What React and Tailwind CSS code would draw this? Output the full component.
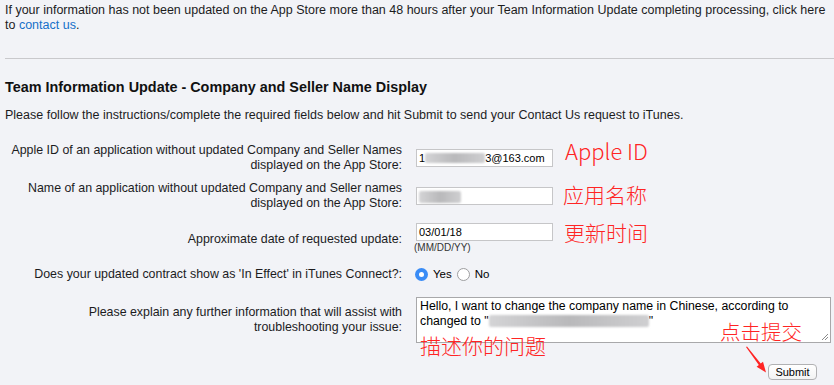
import React from 'react';

function Blur({ className }) {
  return (
    <span
      className={`inline-block align-middle rounded-[2px] blur-[1.2px] bg-linear-to-r from-[#d4d4d6] via-[#b9b9bb] to-[#cfcfd1] ${className}`}
    />
  );
}

function FieldBox({ children, className = '' }) {
  return (
    <div
      className={`h-[18px] w-[137px] border border-[#c6c6c8] bg-white px-[2px] text-[11px] leading-[16px] text-black whitespace-nowrap overflow-hidden ${className}`}
    >
      {children}
    </div>
  );
}

function Row({ label, children, className = '' }) {
  return (
    <div className={`flex items-center ${className}`}>
      <div className="w-[397px] shrink-0 text-right whitespace-nowrap">{label}</div>
      <div className="ml-[14px] flex-1">{children}</div>
    </div>
  );
}

export default function App() {
  return (
    <div className="relative w-[834px] h-[385px] overflow-hidden bg-[#f2f3f7] text-[#1c1c1e] font-['Liberation_Sans',Arial,sans-serif]">
      <div className="pl-[5px] pt-[3px]">
        {/* Notice */}
        <p className="text-[12.5px] leading-[15px] whitespace-nowrap">
          If your information has not been updated on the App Store more than 48 hours after your Team Information Update completing processing, click here
          <br />
          to <a className="text-[#1570c9]">contact us</a>.
        </p>

        <div className="mt-[25px] border-t border-[#c9c9cc]" />

        {/* Heading */}
        <h2 className="mt-[19px] text-[14.4px] font-bold leading-[18px] text-[#111]">
          Team Information Update - Company and Seller Name Display
        </h2>
        <p className="mt-[12px] text-[12.5px] leading-[15px] whitespace-nowrap">
          Please follow the instructions/complete the required fields below and hit Submit to send your Contact Us request to iTunes.
        </p>

        {/* Form */}
        <div className="mt-[20px] pr-[3px] text-[12.4px] leading-[15px]">
          <Row
            label={
              <>
                Apple ID of an application without updated Company and Seller Names
                <br />
                displayed on the App Store:
              </>
            }
          >
            <FieldBox>
              1<Blur className="w-[60px] h-[10px] -mt-[2px]" />3@163.com
            </FieldBox>
          </Row>

          <Row
            className="mt-[8px]"
            label={
              <>
                Name of an application without updated Company and Seller names
                <br />
                displayed on the App Store:
              </>
            }
          >
            <FieldBox>
              <Blur className="w-[42px] h-[12px] -mt-[1px]" />
            </FieldBox>
          </Row>

          <Row className="mt-[12px]" label="Approximate date of requested update:">
            <FieldBox>03/01/18</FieldBox>
            <div className="-ml-[2px] text-[10px] leading-[14px] text-[#333]">(MM/DD/YY)</div>
          </Row>

          <Row className="mt-[11px]" label="Does your updated contract show as 'In Effect' in iTunes Connect?:">
            <div className="-ml-[1px] flex items-center h-[16px] text-[11.5px] text-black">
              <span className="flex h-[13px] w-[13px] items-center justify-center rounded-full bg-[#3a8cf6]">
                <span className="h-[5px] w-[5px] rounded-full bg-white" />
              </span>
              <span className="ml-[5px]">Yes</span>
              <span className="ml-[5px] h-[13px] w-[13px] rounded-full border border-[#9e9ea0] bg-white" />
              <span className="ml-[5px]">No</span>
            </div>
          </Row>

          <Row
            className="mt-[15px]"
            label={
              <>
                Please explain any further information that will assist with
                <br />
                troubleshooting your issue:
              </>
            }
          >
            <div className="relative h-[46px] border border-[#a8a8aa] bg-white px-[3px] pt-[1px] text-[12.3px] leading-[15px] text-black whitespace-nowrap">
              Hello, I want to change the company name in Chinese, according to
              <br />
              changed to "<Blur className="w-[160px] h-[12px] -mt-[1px]" />"
              <svg className="absolute right-[1px] bottom-[1px]" width="8" height="8" viewBox="0 0 8 8">
                <path d="M7 1 L1 7 M7 4 L4 7" stroke="#8a8a8a" strokeWidth="1" fill="none" />
              </svg>
            </div>
          </Row>

          <div className="flex">
            <div className="ml-[763px] mt-[21px] flex h-[16px] w-[49px] items-center justify-center rounded-[4px] border border-[#b1b1b3] bg-linear-to-b from-white to-[#f3f3f3] text-[11px] text-black">
              Submit
            </div>
          </div>
        </div>
      </div>

      {/* Annotations drawn over the screenshot */}
      <div className="pointer-events-none font-['Noto_Sans_CJK_SC','Noto_Sans',sans-serif] text-[#ff2424] font-light leading-none">
        <span className="absolute left-[565px] top-[139px] text-[22px]">Apple ID</span>
        <span className="absolute left-[563px] top-[184px] text-[21px]">应用名称</span>
        <span className="absolute left-[564px] top-[222px] text-[21px]">更新时间</span>
        <span className="absolute left-[420px] top-[335px] text-[21px]">描述你的问题</span>
        <span className="absolute left-[720px] top-[321px] text-[20.5px]">点击提交</span>
        <svg className="absolute left-[740px] top-[343px]" width="32" height="34" viewBox="0 0 32 34">
          <polygon points="6,4 7,3.6 20.7,20.4 23,18.7 26,29.5 16.6,23.7 18.8,22" fill="#ff2424" />
        </svg>
      </div>
    </div>
  );
}
